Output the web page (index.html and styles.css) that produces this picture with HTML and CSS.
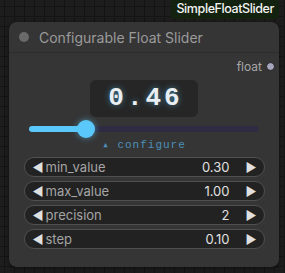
FILE: index.html
```html
<!DOCTYPE html>
<html>
<head>
  <meta charset="UTF-8">
  <title>Configurable Float Slider</title>
  <link rel="stylesheet" href="styles.css">
</head>
<body class="canvas">
<div class="badge-row">
  <div class="badge">SimpleFloatSlider</div>
</div>
<div class="node">
  <div class="node-title">
    <span class="title-dot"></span>
    <span class="title-text">Configurable Float Slider</span>
  </div>
  <div class="outputs">
    <span class="output-name">float</span>
    <span class="output-slot"></span>
  </div>
  <div class="readout">0.46</div>
  <div class="slider">
    <div class="slider-fill"></div>
    <div class="slider-thumb"></div>
  </div>
  <div class="configure">&#9652; configure</div>
  <div class="widgets">
    <div class="widget">
      <span class="arrow">&#9664;</span>
      <span class="w-label">min_value</span>
      <span class="w-value">0.30</span>
      <span class="arrow">&#9654;</span>
    </div>
    <div class="widget">
      <span class="arrow">&#9664;</span>
      <span class="w-label">max_value</span>
      <span class="w-value">1.00</span>
      <span class="arrow">&#9654;</span>
    </div>
    <div class="widget">
      <span class="arrow">&#9664;</span>
      <span class="w-label">precision</span>
      <span class="w-value">2</span>
      <span class="arrow">&#9654;</span>
    </div>
    <div class="widget">
      <span class="arrow">&#9664;</span>
      <span class="w-label">step</span>
      <span class="w-value">0.10</span>
      <span class="arrow">&#9654;</span>
    </div>
  </div>
</div>
</body>
</html>
```

FILE: styles.css
```css
html, body {
  margin: 0;
  padding: 0;
}

.canvas {
  width: 285px;
  height: 273px;
  overflow: hidden;
  font-family: Inter, "Liberation Sans", sans-serif;
  background-color: #1d1d1d;
  background-image:
    linear-gradient(to right, #141414 1px, transparent 1px),
    linear-gradient(to bottom, #141414 1px, transparent 1px);
  background-size: 10px 10px;
  background-position: 4px 6px;
}

.badge-row {
  display: flex;
  justify-content: flex-end;
  padding-right: 6px;
  height: 22px;
}

.badge {
  height: 19px;
  line-height: 18px;
  padding: 0 5px;
  background: #13210f;
  color: #f4f4f4;
  font-size: 12.5px;
  font-weight: 500;
  border-radius: 0 0 4px 4px;
  letter-spacing: -0.4px;
}

.node {
  margin-left: 9px;
  width: 270px;
  height: 245px;
  background: #353535;
  border-radius: 8px;
  box-shadow: 0 1px 4px rgba(0, 0, 0, .5);
}

.node-title {
  display: flex;
  align-items: center;
  height: 30px;
  padding-left: 10px;
  border-bottom: 1px solid #2c2c2c;
}

.title-dot {
  width: 10px;
  height: 10px;
  border-radius: 50%;
  background: #6a6a6a;
  margin-right: 10px;
}

.title-text {
  color: #9b9b9b;
  font-size: 14px;
}

.outputs {
  display: flex;
  justify-content: flex-end;
  align-items: center;
  height: 27px;
  padding-right: 4px;
}

.output-name {
  color: #a6a6a6;
  font-size: 12px;
  margin-right: 4px;
}

.output-slot {
  width: 7px;
  height: 7px;
  border-radius: 50%;
  background: #a6a6bd;
  border: 1.5px solid #1b1b1b;
}

.readout {
  width: 108px;
  height: 37px;
  margin: 0 auto;
  background: #262626;
  border-radius: 6px;
  color: #e8eef2;
  font-family: "Liberation Mono", monospace;
  font-weight: bold;
  font-size: 26px;
  letter-spacing: 3px;
  padding-left: 3px;
  box-sizing: border-box;
  line-height: 37px;
  text-align: center;
  text-shadow: 0 0 6px rgba(90, 200, 250, .55);
}

.slider {
  position: relative;
  width: 230px;
  height: 6px;
  margin: 9px auto 0;
  background: #2e2b42;
  border-radius: 3px;
}

.slider-fill {
  width: 57px;
  height: 6px;
  background: #5ac8fa;
  border-radius: 3px;
}

.slider-thumb {
  position: absolute;
  left: 48px;
  top: -6px;
  width: 18px;
  height: 18px;
  border-radius: 50%;
  background: #5ac8fa;
  box-shadow: 0 0 6px rgba(90, 200, 250, .6);
}

.configure {
  margin-top: 7px;
  text-align: center;
  color: #4c8fba;
  font-family: "Liberation Mono", monospace;
  font-size: 11px;
  letter-spacing: 1px;
  height: 13px;
  line-height: 13px;
}

.widgets {
  display: flex;
  flex-direction: column;
  gap: 4px;
  width: 241px;
  margin: 5px auto 0;
}

.widget {
  display: flex;
  align-items: center;
  height: 18px;
  padding: 0 5px 0 8px;
  background: #222222;
  border: 1px solid #505050;
  border-radius: 10px;
  font-size: 13px;
}

.arrow {
  color: #e0e0e0;
  font-size: 12px;
  width: 13px;
}

.w-label {
  color: #a5a5a5;
  flex: 1;
}

.w-value {
  color: #e0e0e0;
  margin-right: 16px;
}
```
